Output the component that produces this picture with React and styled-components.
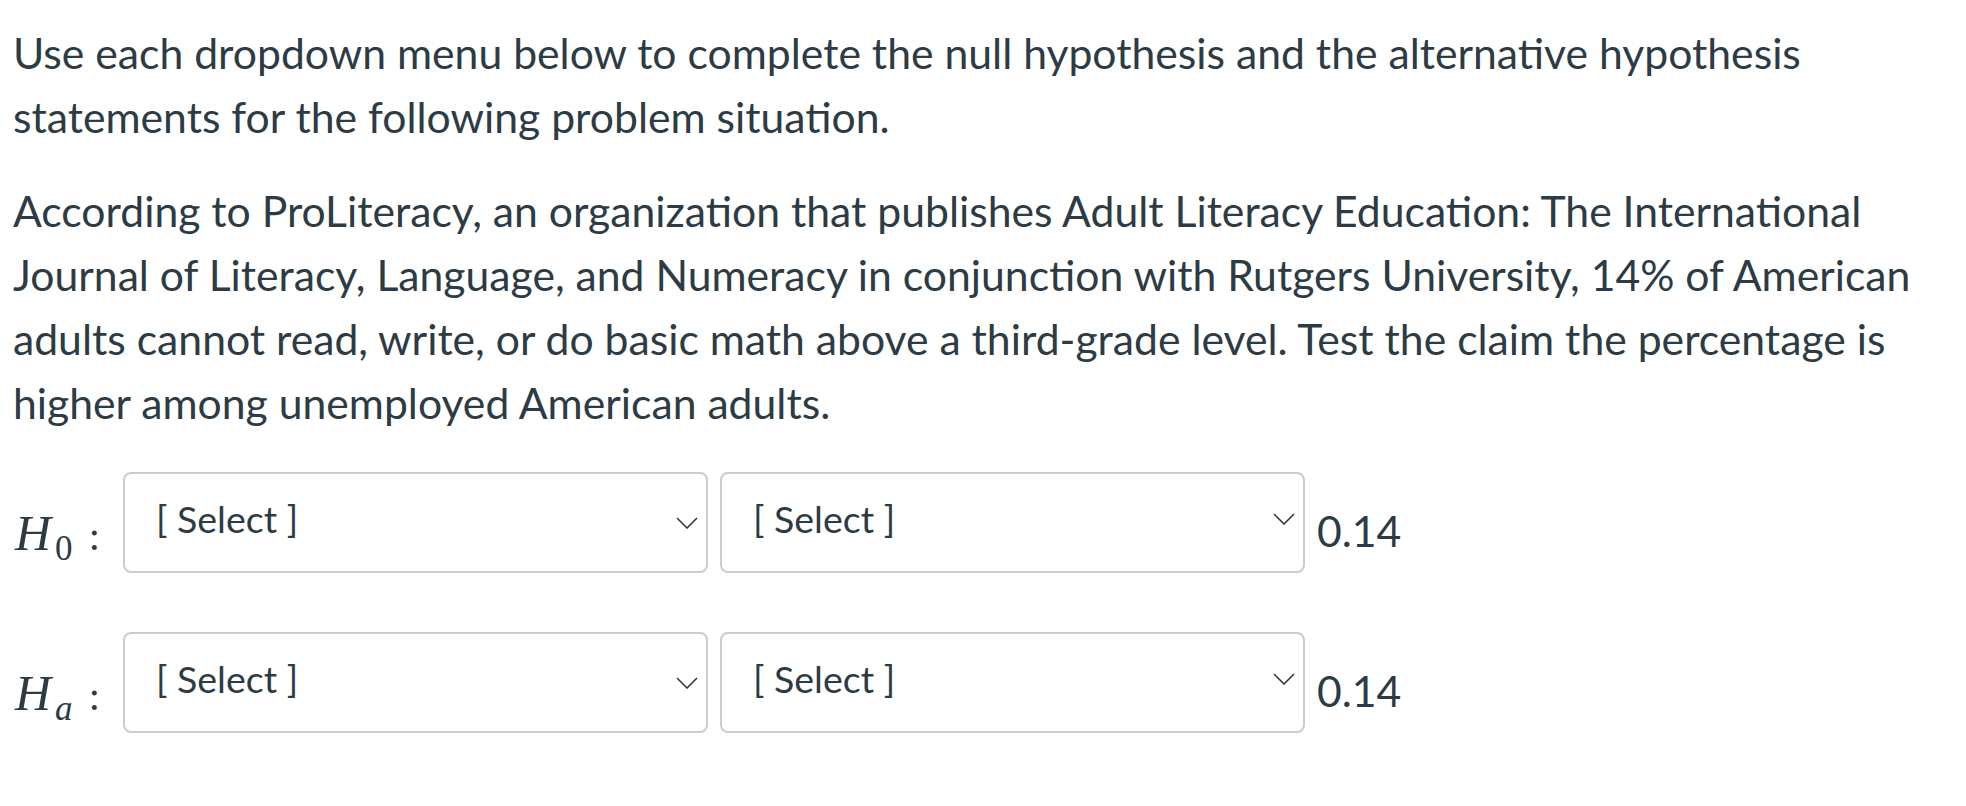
import styled, { createGlobalStyle } from 'styled-components'

const GlobalStyle = createGlobalStyle`
  body {
    margin: 0;
    background: #ffffff;
    font-family: Lato, 'Liberation Sans', sans-serif;
    color: #2d3b45;
  }
`

const Page = styled.div`
  padding: 21px 20px 0 13px;
`

const Paragraph = styled.p`
  margin: 0 0 30px 0;
  font-size: 42.7px;
  line-height: 64px;
`

const Rows = styled.div`
  display: flex;
  flex-direction: column;
  gap: 59px;
  margin-top: 37px;
`

const Row = styled.div`
  display: flex;
  align-items: center;
`

const MathLabel = styled.div`
  width: 108px;
  display: flex;
  align-items: baseline;
  padding-top: 20px;
  padding-left: 2px;
  font-family: 'Liberation Serif', 'DejaVu Serif', serif;
  color: #2d3b45;
`

const MathVar = styled.span`
  font-style: italic;
  font-size: 50px;
`

const Sub = styled.span`
  font-size: 35px;
  font-style: ${(props) => (props.italic ? 'italic' : 'normal')};
  position: relative;
  top: 10px;
  margin-left: 4px;
`

const Colon = styled.span`
  font-size: 42px;
  margin-left: 16px;
`

const SelectBox = styled.div`
  width: 585px;
  height: 101px;
  box-sizing: border-box;
  border: 2px solid #c7cdd1;
  border-radius: 8px;
  display: flex;
  align-items: center;
  justify-content: space-between;
  padding: 0 8px 8px 31px;
  margin-right: ${(props) => props.gap || 0}px;
  background: #ffffff;
`

const SelectText = styled.span`
  font-size: 37.5px;
  color: #2d3b45;
`

const Chevron = styled.svg`
  width: 22px;
  height: 12px;
  margin-top: ${(props) => props.shift || 0}px;
`

const Value = styled.span`
  font-size: 42.7px;
  margin-left: 12px;
  padding-top: 16px;
`

function Dropdown({ gap, shift }) {
  return (
    <SelectBox gap={gap}>
      <SelectText>[ Select ]</SelectText>
      <Chevron viewBox="0 0 22 12" shift={shift}>
        <path d="M1 1 L11 11 L21 1" fill="none" stroke="#2d3b45" strokeWidth="1.6" />
      </Chevron>
    </SelectBox>
  )
}

function HypothesisRow({ sub, italic }) {
  return (
    <Row>
      <MathLabel>
        <MathVar>H</MathVar>
        <Sub italic={italic}>{sub}</Sub>
        <Colon>:</Colon>
      </MathLabel>
      <Dropdown gap={12} shift={8} />
      <Dropdown shift={0} />
      <Value>0.14</Value>
    </Row>
  )
}

export default function App() {
  return (
    <Page>
      <GlobalStyle />
      <Paragraph>
        Use each dropdown menu below to complete the null hypothesis and the
        alternative hypothesis statements for the following problem situation.
      </Paragraph>
      <Paragraph>
        According to ProLiteracy, an organization that publishes Adult Literacy
        Education: The International Journal of Literacy, Language, and
        Numeracy in conjunction with Rutgers University, 14% of American adults
        cannot read, write, or do basic math above a third-grade level. Test the
        claim the percentage is higher among unemployed American adults.
      </Paragraph>
      <Rows>
        <HypothesisRow sub="0" />
        <HypothesisRow sub="a" italic />
      </Rows>
    </Page>
  )
}
